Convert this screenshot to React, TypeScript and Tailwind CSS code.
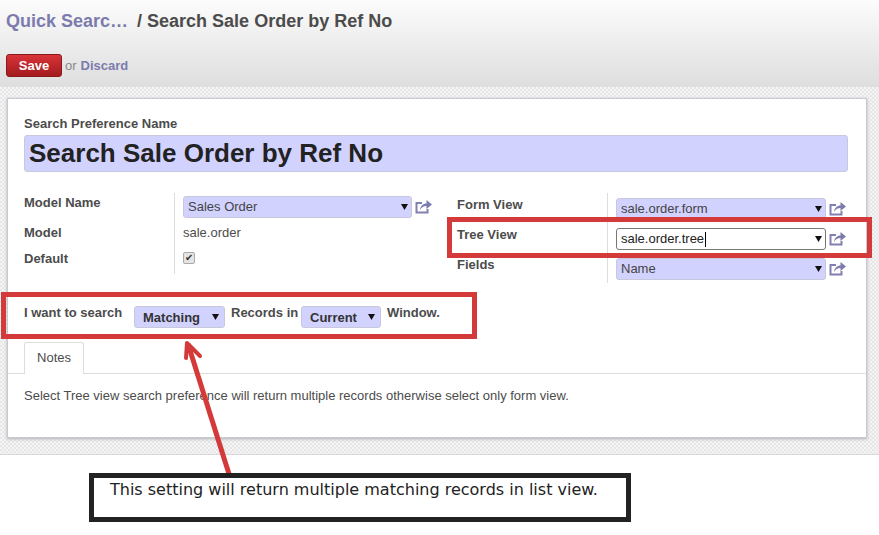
function Caret() {
  return (
    <svg width="7" height="6" viewBox="0 0 7 6" className="shrink-0">
      <path d="M0 0h7L3.5 6z" fill="#111" />
    </svg>
  );
}

function Select({ value, width, focused }: { value: string; width: string; focused?: boolean }) {
  return (
    <div
      className={`flex h-[22px] items-center justify-between rounded-[3px] border pl-[4px] pr-[3px] text-[13px] ${width} ${
        focused ? "border-[#777] bg-white text-[#222]" : "border-[#c8c8dc] bg-[#d2d2ff] text-[#444]"
      }`}
    >
      <span className="flex items-center">
        {value}
        {focused && <span className="ml-px h-[15px] w-px bg-black" />}
      </span>
      <Caret />
    </div>
  );
}

function ShareIcon() {
  return (
    <svg width="17" height="15" viewBox="0 0 17 15" className="ml-[3px] mt-[3px] shrink-0" fill="none">
      <path d="M7 4H1.500v9.500h11V10" stroke="#8180b0" strokeWidth="2" />
      <path d="M5 11C5.500 7 8 4.500 11.500 4.500V1L17 5.500 11.500 10V7C8.500 7 6.500 8.500 5 11z" fill="#7c7bad" />
    </svg>
  );
}

function InlineSelect({ value, width }: { value: string; width: string }) {
  return (
    <div
      className={`mt-[2px] flex h-[22px] items-center justify-between rounded-[3px] border border-[#c8c8dc] bg-[#d2d2ff] pl-[8px] pr-[5px] text-[13px] font-bold text-[#333] ${width}`}
    >
      {value}
      <Caret />
    </div>
  );
}

export default function App() {
  return (
    <div className="relative h-[535px] w-[879px] overflow-hidden bg-white font-['Liberation_Sans',Arial,sans-serif] text-[13px] text-[#4c4c4c]">
      {/* Header */}
      <header className="h-[87px] bg-gradient-to-b from-[#fcfcfc] to-[#dedede] px-[6px] pt-[9px]">
        <div className="flex items-center text-[18px] font-bold leading-[24px]">
          <span className="text-[#7c7bad]">Quick Searc…</span>
          <span className="ml-[9px] text-[#4c4c4c]">/ Search Sale Order by Ref No</span>
        </div>
        <div className="mt-[21px] flex items-center gap-[3px]">
          <button className="h-[23px] w-[56px] rounded-[3px] border border-[#8a1a1a] bg-gradient-to-b from-[#d9333a] to-[#a31b1e] text-[13px] font-bold text-white">
            Save
          </button>
          <span className="text-[#888]">or</span>
          <span className="ml-px font-bold text-[#7c7bad]">Discard</span>
        </div>
      </header>

      {/* Sheet */}
      <main className="h-[368px] border-b border-[#d8d8d8] bg-[repeating-conic-gradient(#e6e6e6_0_25%,#f5f5f5_0_50%)] bg-[length:4px_4px] pl-[7px] pr-[12px] pt-[11px]">
        <section className="h-[340px] border border-[#c9c9d6] bg-white pt-[17px] shadow-[0_1px_3px_rgba(0,0,0,0.25)]">
          <div className="pl-[16px] pr-[18px]">
            <div className="text-[13px] font-bold leading-[15px]">Search Preference Name</div>
            <div className="mt-[4px] h-[37px] rounded-[3px] border border-[#c8c8dc] bg-[#d2d2ff] pl-[4px] text-[26px] font-bold leading-[35px] text-[#222]">
              Search Sale Order by Ref No
            </div>
          </div>

          <div className="mt-[21px] flex items-start pl-[16px]">
            {/* Left group */}
            <div className="grid w-[433px] grid-cols-[150px_1fr] grid-rows-[28px_27px_26px] items-start">
              <div className="pt-[2px] font-bold leading-[15px]">Model Name</div>
              <div className="flex h-full border-l border-[#ddd] pl-[8px] pt-[3px]">
                <Select value="Sales Order" width="w-[229px]" />
                <ShareIcon />
              </div>
              <div className="pt-[4px] font-bold leading-[15px]">Model</div>
              <div className="h-full border-l border-[#ddd] pl-[8px] pt-[4px] leading-[15px]">sale.order</div>
              <div className="pt-[3px] font-bold leading-[15px]">Default</div>
              <div className="h-full border-l border-[#ddd] pl-[8px] pt-[4px]">
                <div className="flex h-[12px] w-[12px] items-center justify-center rounded-[2px] border border-[#aaa] bg-[#e4e4e4] text-[10px] leading-none text-[#333]">
                  ✔
                </div>
              </div>
            </div>

            {/* Right group */}
            <div className="grid grid-cols-[150px_1fr] grid-rows-[30px_30px_30px] items-start">
              <div className="pt-[4px] font-bold leading-[15px]">Form View</div>
              <div className="flex h-full border-l border-[#ddd] pl-[8px] pt-[5px]">
                <Select value="sale.order.form" width="w-[210px]" />
                <ShareIcon />
              </div>
              <div className="pt-[4px] font-bold leading-[15px]">Tree View</div>
              <div className="flex h-full border-l border-[#ddd] pl-[8px] pt-[5px]">
                <Select value="sale.order.tree" width="w-[210px]" focused />
                <ShareIcon />
              </div>
              <div className="pt-[4px] font-bold leading-[15px]">Fields</div>
              <div className="flex h-full border-l border-[#ddd] pl-[8px] pt-[5px]">
                <Select value="Name" width="w-[210px]" />
                <ShareIcon />
              </div>
            </div>
          </div>

          <div className="mt-[21px] flex items-start pl-[16px] font-bold leading-[15px]">
            <span className="w-[110px] pt-[1px]">I want to search</span>
            <InlineSelect value="Matching" width="w-[91px]" />
            <span className="ml-[6px] w-[70px] pt-[1px]">Records in</span>
            <InlineSelect value="Current" width="w-[80px]" />
            <span className="ml-[6px] pt-[1px]">Window.</span>
          </div>

          {/* Tabs */}
          <div className="mt-[14px] h-[32px] border-b border-[#ddd] pl-[16px]">
            <div className="h-[32px] w-[60px] rounded-t-[3px] border border-b-0 border-[#ddd] bg-white text-center leading-[30px]">
              Notes
            </div>
          </div>
          <p className="mt-[14px] px-[16px] leading-[15px]">
            Select Tree view search preference will return multiple records otherwise select only form view.
          </p>
        </section>
      </main>

      {/* Annotations */}
      <div className="absolute left-[447px] top-[217px] h-[41px] w-[425px] border-[5px] border-[#d43a3a]" />
      <div className="absolute left-[1px] top-[292px] h-[47px] w-[476px] border-[5px] border-[#d43a3a]" />
      <svg className="absolute left-0 top-0" width="879" height="535" fill="none">
        <path d="M229 474L188 344" stroke="#d43a3a" strokeWidth="5" />
        <path d="M186 358L187 343L200 356" stroke="#d43a3a" strokeWidth="4" strokeLinecap="round" strokeLinejoin="round" />
      </svg>
      <div className="absolute left-[89px] top-[473px] h-[49px] w-[542px] border-[5px] border-[#222] bg-white pl-[16px] font-['DejaVu_Sans',sans-serif] text-[16px] leading-[24px] text-[#222]">
        This setting will return multiple matching records in list view.
      </div>
    </div>
  );
}
